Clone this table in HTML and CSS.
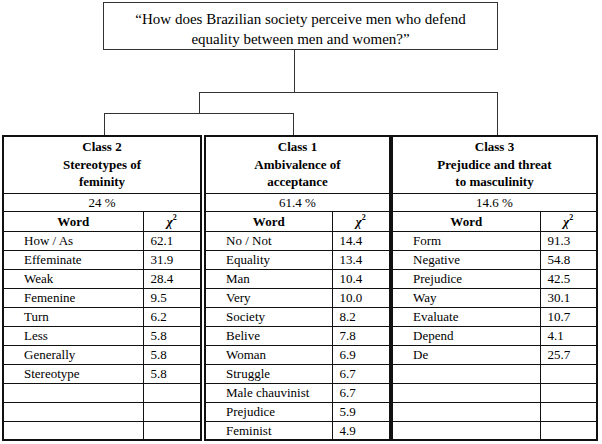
FILE: index.html
```html
<!DOCTYPE html>
<html lang="en">
<head>
<meta charset="utf-8">
<title>Classes</title>
<link rel="stylesheet" href="styles.css">
</head>
<body>
<div class="question">“How does Brazilian society perceive men who defend<br>equality between men and women?”</div>
<svg class="tree" width="602" height="85" viewBox="0 0 602 85">
  <g stroke="#333" stroke-width="1" fill="none">
    <line x1="294.5" y1="0" x2="294.5" y2="42"/>
    <line x1="199" y1="42.5" x2="498" y2="42.5"/>
    <line x1="199.5" y1="42" x2="199.5" y2="63"/>
    <line x1="497.5" y1="42" x2="497.5" y2="85"/>
    <line x1="104" y1="63.5" x2="294" y2="63.5"/>
    <line x1="104.5" y1="63" x2="104.5" y2="85"/>
    <line x1="293.5" y1="63" x2="293.5" y2="85"/>
  </g>
</svg>
<div class="classes">
  <table class="cls c2">
    <colgroup><col class="w"><col class="x"></colgroup>
    <tr class="hd"><th colspan="2">Class 2<br>Stereotypes of<br>feminity</th></tr>
    <tr class="pc"><td colspan="2">24 %</td></tr>
    <tr class="wh"><th>Word</th><th class="chi"><i>χ</i><sup>2</sup></th></tr>
    <tr><td>How / As</td><td>62.1</td></tr>
    <tr><td>Effeminate</td><td>31.9</td></tr>
    <tr><td>Weak</td><td>28.4</td></tr>
    <tr><td>Femenine</td><td>9.5</td></tr>
    <tr><td>Turn</td><td>6.2</td></tr>
    <tr><td>Less</td><td>5.8</td></tr>
    <tr><td>Generally</td><td>5.8</td></tr>
    <tr><td>Stereotype</td><td>5.8</td></tr>
    <tr><td></td><td></td></tr>
    <tr><td></td><td></td></tr>
    <tr><td></td><td></td></tr>
  </table>
  <table class="cls c1">
    <colgroup><col class="w"><col class="x"></colgroup>
    <tr class="hd"><th colspan="2">Class 1<br>Ambivalence of<br>acceptance</th></tr>
    <tr class="pc"><td colspan="2">61.4 %</td></tr>
    <tr class="wh"><th>Word</th><th class="chi"><i>χ</i><sup>2</sup></th></tr>
    <tr><td>No / Not</td><td>14.4</td></tr>
    <tr><td>Equality</td><td>13.4</td></tr>
    <tr><td>Man</td><td>10.4</td></tr>
    <tr><td>Very</td><td>10.0</td></tr>
    <tr><td>Society</td><td>8.2</td></tr>
    <tr><td>Belive</td><td>7.8</td></tr>
    <tr><td>Woman</td><td>6.9</td></tr>
    <tr><td>Struggle</td><td>6.7</td></tr>
    <tr><td>Male chauvinist</td><td>6.7</td></tr>
    <tr><td>Prejudice</td><td>5.9</td></tr>
    <tr><td>Feminist</td><td>4.9</td></tr>
  </table>
  <table class="cls c3">
    <colgroup><col class="w"><col class="x"></colgroup>
    <tr class="hd"><th colspan="2">Class 3<br>Prejudice and threat<br>to masculinity</th></tr>
    <tr class="pc"><td colspan="2">14.6 %</td></tr>
    <tr class="wh"><th>Word</th><th class="chi"><i>χ</i><sup>2</sup></th></tr>
    <tr><td>Form</td><td>91.3</td></tr>
    <tr><td>Negative</td><td>54.8</td></tr>
    <tr><td>Prejudice</td><td>42.5</td></tr>
    <tr><td>Way</td><td>30.1</td></tr>
    <tr><td>Evaluate</td><td>10.7</td></tr>
    <tr><td>Depend</td><td>4.1</td></tr>
    <tr><td>De</td><td>25.7</td></tr>
    <tr><td></td><td></td></tr>
    <tr><td></td><td></td></tr>
    <tr><td></td><td></td></tr>
    <tr><td></td><td></td></tr>
  </table>
</div>
</body>
</html>
```

FILE: styles.css
```css
html, body {
  margin: 0;
  padding: 0;
  background: #fff;
}
body {
  font-family: "Liberation Serif", "Times New Roman", serif;
  color: #000;
}
.question {
  box-sizing: border-box;
  margin: 2px 0 0 103px;
  width: 395px;
  height: 48px;
  border: 1px solid #333;
  padding-top: 6px;
  text-align: center;
  font-size: 15px;
  line-height: 20px;
}
.tree {
  display: block;
}
.classes {
  display: flex;
  margin-left: 2px;
}
.cls {
  border-collapse: collapse;
  border: 2px solid #111;
  table-layout: fixed;
  font-size: 13px;
}
.c2 { width: 200px; margin-right: 2px; }
.c1 { width: 187px; }
.c3 { width: 207px; }
.c2 col.w { width: 140px; }
.c1 col.w { width: 127px; }
.c3 col.w { width: 148px; }
.cls td, .cls th {
  border: 1px solid #111;
  padding: 0;
  line-height: 15px;
  white-space: nowrap;
}
.cls td:first-child { padding-left: 20px; }
.cls td + td { padding-left: 7px; }
.cls tr { height: 19px; }
.cls tr.hd { height: 57px; }
.cls tr.hd th {
  font-weight: bold;
  line-height: 17.5px;
  text-align: center;
  padding-bottom: 1px;
}
.cls tr.pc { height: 18px; }
.cls tr.pc td { text-align: center; padding-left: 0; }
.cls tr.wh { height: 20px; }
.cls tr.wh th { font-weight: bold; text-align: center; }
.cls th.chi { font-weight: normal; }
.cls th.chi sup {
  font-size: 8px;
  vertical-align: 6px;
  line-height: 0;
}
```
